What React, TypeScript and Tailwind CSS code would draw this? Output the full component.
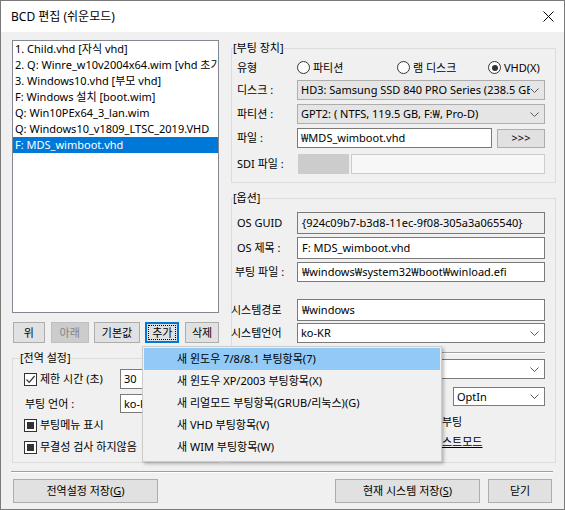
import type { ReactNode } from "react";

function Chevron() {
  return (
    <svg width="9" height="5" viewBox="0 0 9 5" className="shrink-0">
      <path d="M0.5 0.5 L4.5 4.5 L8.5 0.5" fill="none" stroke="#5a5a5a" strokeWidth="1" />
    </svg>
  );
}

function Combo({ text, gray, className = "" }: { text: string; gray?: boolean; className?: string }) {
  return (
    <div
      className={`flex items-center border pl-[3px] pr-[5px] ${
        gray ? "border-[#adadad] bg-[#e5e5e5]" : "border-[#7a7a7a] bg-white"
      } ${className}`}
    >
      <span className="min-w-0 flex-1 overflow-hidden whitespace-nowrap">{text}</span>
      <Chevron />
    </div>
  );
}

function Field({ text, className = "" }: { text?: string; className?: string }) {
  return (
    <div className={`flex items-center overflow-hidden whitespace-nowrap border pl-[3px] ${className}`}>
      {text}
    </div>
  );
}

function Btn({
  children,
  className = "",
  disabled,
  focused,
}: {
  children: ReactNode;
  className?: string;
  disabled?: boolean;
  focused?: boolean;
}) {
  const look = disabled
    ? "border border-[#bfbfbf] bg-[#cccccc] text-[#838383]"
    : focused
    ? "border-2 border-[#0078d7] bg-[#e1e1e1] outline-1 outline-dotted outline-black outline-offset-[-4px]"
    : "border border-[#adadad] bg-[#e1e1e1]";
  return <div className={`flex items-center justify-center ${look} ${className}`}>{children}</div>;
}

function Radio({ label, checked, className = "" }: { label: string; checked?: boolean; className?: string }) {
  return (
    <div className={`flex items-center gap-[3px] ${className}`}>
      <div className="flex h-[13px] w-[13px] items-center justify-center rounded-full border border-[#333333] bg-white">
        {checked && <div className="h-[6px] w-[6px] rounded-full bg-[#333333]" />}
      </div>
      <span>{label}</span>
    </div>
  );
}

function Check({ label, state }: { label: string; state: "checked" | "mixed" }) {
  return (
    <div className="flex items-center gap-[3px]">
      <div className="flex h-[13px] w-[13px] items-center justify-center border border-[#333333] bg-white">
        {state === "checked" ? (
          <svg width="11" height="11" viewBox="0 0 11 11">
            <path d="M1.5 5.5 L4.2 8.3 L9.6 2" fill="none" stroke="#333333" strokeWidth="1.2" />
          </svg>
        ) : (
          <div className="h-[7px] w-[7px] bg-[#333333]" />
        )}
      </div>
      <span>{label}</span>
    </div>
  );
}

const entries = [
  "1. Child.vhd [자식 vhd]",
  "2. Q: Winre_w10v2004x64.wim [vhd 초기화 용]",
  "3. Windows10.vhd [부모 vhd]",
  "F: Windows 설치 [boot.wim]",
  "Q: Win10PEx64_3_lan.wim",
  "Q: Windows10_v1809_LTSC_2019.VHD",
  "F: MDS_wimboot.vhd",
];

const menuItems = [
  "새 윈도우 7/8/8.1 부팅항목(7)",
  "새 윈도우 XP/2003 부팅항목(X)",
  "새 리얼모드 부팅항목(GRUB/리눅스)(G)",
  "새 VHD 부팅항목(V)",
  "새 WIM 부팅항목(W)",
];

export default function App() {
  return (
    <div className="relative h-[510px] w-[565px] overflow-hidden border border-[#7a7a7a] bg-[#f0f0f0] font-['Noto_Sans','Noto_Sans_CJK_KR',sans-serif] text-[11px] leading-[16px] text-black">
      {/* title bar */}
      <div className="flex h-[31px] items-center justify-between bg-white pl-[10px] pr-[10px] text-[12px]">
        <span>BCD 편집 (쉬운모드)</span>
        <svg width="11" height="11" viewBox="0 0 11 11">
          <path d="M0.5 0.5 L10.5 10.5 M10.5 0.5 L0.5 10.5" stroke="#000" strokeWidth="1" />
        </svg>
      </div>

      <div className="flex h-[432px] pl-[11px] pt-[8px]">
        {/* left column */}
        <div className="flex w-[207px] flex-col">
          <div className="h-[273px] overflow-hidden border border-[#828790] bg-white">
            {entries.map((e, i) => (
              <div
                key={e}
                className={`h-[16px] whitespace-nowrap pl-[2px] ${
                  i === entries.length - 1 ? "bg-[#0078d7] text-white" : ""
                }`}
              >
                {e}
              </div>
            ))}
          </div>

          <div className="ml-[1px] mt-[9px] flex h-[21px] gap-[5px]">
            <Btn className="w-[32px]">위</Btn>
            <Btn className="ml-[1px] w-[38px]" disabled>
              아래
            </Btn>
            <Btn className="w-[47px]">기본값</Btn>
            <Btn className="w-[34px]" focused>
              추가
            </Btn>
            <Btn className="ml-[1px] w-[34px]">삭제</Btn>
          </div>

          <fieldset className="mt-[7px] h-[113px] border border-[#dcdcdc]">
            <legend className="ml-[7px]">[전역 설정]</legend>
            <div className="pl-[11px]">
              <div className="mt-[3px] flex h-[20px] items-center">
                <div className="w-[96px]">
                  <Check label="제한 시간 (초)" state="checked" />
                </div>
                <Field text="30" className="h-[20px] w-[80px] border-[#7a7a7a] bg-white" />
              </div>
              <div className="mt-[5px] flex h-[19px] items-center">
                <span className="w-[96px] pl-[1px]">부팅 언어 :</span>
                <Combo text="ko-KR" className="h-[19px] w-[80px]" />
              </div>
              <div className="mt-[3px] flex h-[18px] items-center">
                <Check label="부팅메뉴 표시" state="mixed" />
              </div>
              <div className="mt-[4px] flex h-[18px] items-center">
                <Check label="무결성 검사 하지않음" state="mixed" />
              </div>
            </div>
          </fieldset>
        </div>

        {/* right column */}
        <div className="ml-[12px] flex w-[325px] flex-col">
          <fieldset className="h-[143px] border border-[#dcdcdc]">
            <legend className="ml-[1px]">[부팅 장치]</legend>
            <div className="pl-[5px] pr-[10px]">
              <div className="mt-[2px] flex h-[19px] items-center">
                <span className="w-[60px]">유형</span>
                <Radio label="파티션" className="w-[100px]" />
                <Radio label="램 디스크" className="w-[91px]" />
                <Radio label="VHD(X)" checked />
              </div>
              <div className="mt-[3px] flex h-[20px] items-center">
                <span className="w-[60px]">디스크 :</span>
                <Combo gray text="HD3: Samsung SSD 840 PRO Series (238.5 GB, NTFS)" className="h-[20px] w-[248px]" />
              </div>
              <div className="mt-[4px] flex h-[20px] items-center">
                <span className="w-[60px]">파티션 :</span>
                <Combo gray text="GPT2: ( NTFS, 119.5 GB, F:₩, Pro-D)" className="h-[20px] w-[248px]" />
              </div>
              <div className="mt-[4px] flex h-[20px] items-center">
                <span className="w-[60px]">파일 :</span>
                <Field text="₩MDS_wimboot.vhd" className="h-[20px] w-[195px] border-[#7a7a7a] bg-white" />
                <Btn className="ml-[5px] h-[19px] w-[48px]">&gt;&gt;&gt;</Btn>
              </div>
              <div className="mt-[6px] flex h-[20px] items-center">
                <span className="w-[61px]">SDI 파일 :</span>
                <div className="h-[20px] w-[51px] bg-[#cccccc]" />
                <Field className="ml-[2px] h-[20px] w-[194px] border-[#cccccc] bg-[#f7f7f7]" />
              </div>
            </div>
          </fieldset>

          <fieldset className="mt-[7px] h-[273px] border border-[#dcdcdc]">
            <legend className="ml-[1px]">[옵션]</legend>
            <div className="pl-[5px] pr-[10px]">
              <div className="mt-[6px] flex h-[22px] items-center">
                <span className="w-[60px]">OS GUID</span>
                <Field
                  text="{924c09b7-b3d8-11ec-9f08-305a3a065540}"
                  className="h-[22px] w-[248px] border-[#7a7a7a] bg-[#f0f0f0] pl-[4px]"
                />
              </div>
              <div className="mt-[3px] flex h-[22px] items-center">
                <span className="w-[60px]">OS 제목 :</span>
                <Field text="F: MDS_wimboot.vhd" className="h-[22px] w-[248px] border-[#7a7a7a] bg-white pl-[4px]" />
              </div>
              <div className="mt-[3px] flex h-[20px] items-center">
                <span className="-ml-[2px] w-[62px]">부팅 파일 :</span>
                <Field
                  text="₩windows₩system32₩boot₩winload.efi"
                  className="h-[20px] w-[248px] border-[#7a7a7a] bg-white pl-[4px]"
                />
              </div>
              <div className="mt-[17px] flex h-[22px] items-center">
                <span className="-ml-[6px] w-[66px]">시스템경로</span>
                <Field text="₩windows" className="h-[22px] w-[248px] border-[#7a7a7a] bg-white pl-[4px]" />
              </div>
              <div className="mt-[2px] flex h-[20px] items-center">
                <span className="-ml-[6px] w-[66px]">시스템언어</span>
                <Combo text="ko-KR" className="h-[20px] w-[248px]" />
              </div>
              <div className="mt-[9px] h-[2px] border-t border-b border-t-[#a0a0a0] border-b-white" />
              <div className="mt-[5px] flex h-[20px] items-center">
                <Combo text="" className="ml-[60px] h-[20px] w-[248px]" />
              </div>
              <div className="mt-[8px] flex h-[19px] items-center">
                <Combo text="OptIn" className="ml-auto h-[19px] w-[92px]" />
              </div>
              <div className="mt-[8px] flex h-[16px] items-center pl-[205px]">부팅</div>
              <div className="mt-[4px] flex h-[16px] items-center pl-[205px]">
                <span className="underline">스트모드</span>
              </div>
            </div>
          </fieldset>
        </div>
      </div>

      {/* bottom */}
      <div className="ml-[10px] mt-[7px] h-[2px] w-[542px] border-t border-b border-t-[#a0a0a0] border-b-white" />
      <div className="mt-[6px] flex h-[24px] pl-[12px]">
        <Btn className="w-[145px]">
          전역설정 저장(<span className="underline">G</span>)
        </Btn>
        <Btn className="ml-[177px] w-[145px]">
          현재 시스템 저장(<span className="underline">S</span>)
        </Btn>
        <Btn className="ml-[8px] w-[64px]">닫기</Btn>
      </div>

      {/* popup menu of the 추가 button */}
      <div className="absolute left-[141px] top-[345px] h-[116px] w-[300px] border border-[#cccccc] bg-[#f0f0f0] p-[1px] shadow-[2px_2px_3px_rgba(0,0,0,0.25)]">
        {menuItems.map((m, i) => (
          <div
            key={m}
            className={`flex h-[22px] items-center whitespace-nowrap pl-[33px] ${i === 0 ? "bg-[#91c9f7]" : ""}`}
          >
            {m}
          </div>
        ))}
      </div>
    </div>
  );
}
